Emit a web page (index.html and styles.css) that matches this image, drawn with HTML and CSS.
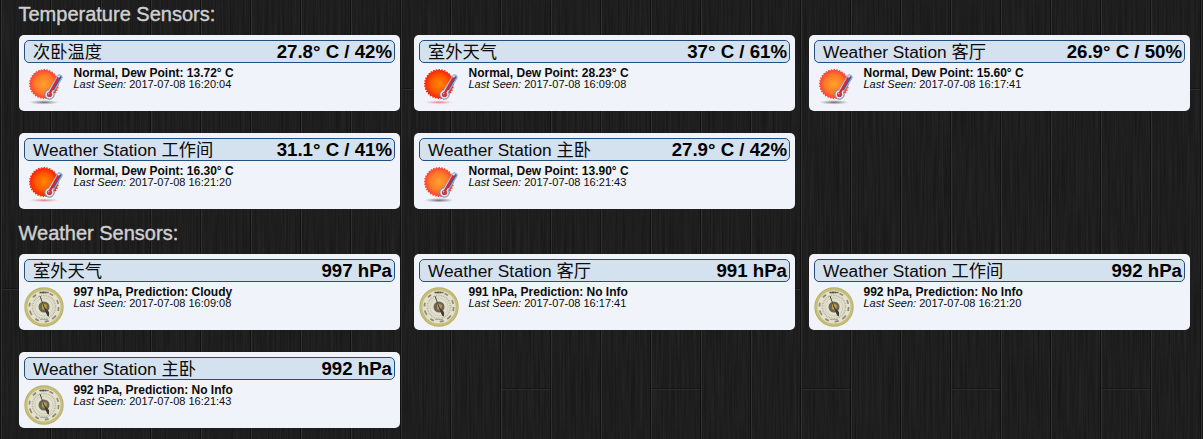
FILE: index.html
```html
<!DOCTYPE html>
<html lang="en">
<head>
<meta charset="utf-8">
<title>Sensors</title>
<link rel="stylesheet" href="styles.css">
</head>
<body>
<svg class="wood" width="1203" height="439" aria-hidden="true">
  <defs>
    <filter id="grain" x="0" y="0" width="100%" height="100%" color-interpolation-filters="sRGB">
      <feTurbulence type="fractalNoise" baseFrequency=".6 .014" numOctaves="2" seed="6"/>
      <feColorMatrix values=".075 0 0 0 .08  .075 0 0 0 .08  .075 0 0 0 .08  0 0 0 0 1"/>
    </filter>
    <pattern id="planks" width="150" height="439" patternUnits="userSpaceOnUse">
      <path d="M.5 0v439M50.500 0v439M100.500 0v439" stroke="#121212"/>
      <path d="M1.500 0v439M51.500 0v439M101.500 0v439" stroke="#303030"/>
      <path d="M102 88.500h48M2 288.500h48M52 388.500h48" stroke="#151515"/>
      <path d="M102 89.500h48M2 289.500h48M52 389.500h48" stroke="#2c2c2c"/>
    </pattern>
    <radialGradient id="warm"><stop offset="0" stop-color="#ffa22c"/><stop offset=".65" stop-color="#ff7a28"/><stop offset="1" stop-color="#fb4535"/></radialGradient>
    <radialGradient id="hot"><stop offset="0" stop-color="#ff8a00"/><stop offset=".6" stop-color="#ff5a00"/><stop offset="1" stop-color="#fa2408"/></radialGradient>
    <radialGradient id="shade"><stop offset="0" stop-color="#555" stop-opacity=".85"/><stop offset="1" stop-color="#777" stop-opacity="0"/></radialGradient>
    <radialGradient id="shadeHot"><stop offset="0" stop-color="#d66" stop-opacity=".8"/><stop offset="1" stop-color="#e88" stop-opacity="0"/></radialGradient>
    <g id="thermometer">
      <path d="M35.500 12.500L26.500 27" stroke="#8f9db8" stroke-width="6" stroke-linecap="round"/>
      <circle cx="25.500" cy="29.500" r="4.700" fill="#dce4ee" stroke="#71819b"/>
      <path d="M35.500 12.500L26.500 27" stroke="#d5e2f2" stroke-width="4.400" stroke-linecap="round"/>
      <path d="M37 11.500L29 25" stroke="#2f62ae" stroke-width="2"/>
      <path d="M34.500 12.500L25.800 28" stroke="#d52830" stroke-width="2.500"/>
      <circle cx="25.500" cy="29.500" r="2.600" fill="#c83843"/>
      <circle cx="24.800" cy="28.800" r=".8" fill="#f3b2b3"/>
    </g>
    <symbol id="sun-warm" viewBox="0 0 40 40">
      <ellipse cx="20" cy="37.300" rx="15" ry="2.300" fill="url(#shade)"/>
      <circle cx="20" cy="19" r="14" fill="url(#warm)"/>
      <circle cx="20" cy="19" r="14.200" fill="none" stroke="#fb4939" stroke-width="1.500" stroke-dasharray="1.500 1.250"/>
      <use href="#thermometer"/>
    </symbol>
    <symbol id="sun-hot" viewBox="0 0 40 40">
      <ellipse cx="20" cy="37.300" rx="15" ry="2" fill="url(#shadeHot)"/>
      <circle cx="20" cy="19" r="14" fill="url(#hot)"/>
      <circle cx="20" cy="19" r="14.200" fill="none" stroke="#fa2810" stroke-width="1.500" stroke-dasharray="1.500 1.250"/>
      <use href="#thermometer"/>
    </symbol>
    <symbol id="barometer" viewBox="0 0 40 40">
      <circle cx="20" cy="20" r="19" fill="#e3e0cc" stroke="#b9b266" stroke-width="1.400"/>
      <circle cx="20" cy="20" r="17.600" fill="none" stroke="#c5be78" stroke-width="2"/>
      <circle cx="20" cy="20" r="14.600" fill="none" stroke="#8c8a7c" stroke-width="1.700" stroke-dasharray="4 5 5 4 4 6"/>
      <circle cx="20" cy="20" r="11.500" fill="none" stroke="#aeac9d" stroke-width="1.600" stroke-dasharray=".8 .9"/>
      <circle cx="20" cy="20" r="9" fill="none" stroke="#c3c1b1" stroke-width=".7"/>
      <path d="M15.500 5.500h9" stroke="#4d4c44" stroke-width="1.700" stroke-dasharray="2 .6"/>
      <circle cx="20" cy="20" r="5.500" fill="#69665a"/>
      <path d="M18 16l5 2-1 6-4-2z" fill="#b99848"/>
      <path d="M16 9l4 11 4 9" fill="none" stroke="#4a493f" stroke-width="1"/>
      <path d="M20 20l5 5 0 5-3-4z" fill="#3d3b32"/>
      <path d="M16 32.500h8" stroke="#aaa898" stroke-width="1"/>
    </symbol>
  </defs>
  <rect width="1203" height="439" filter="url(#grain)"/>
  <rect width="1203" height="439" fill="url(#planks)"/>
</svg>
<main class="page">
  <section class="group">
    <h2 class="heading">Temperature Sensors:</h2>
    <div class="cards">
      <article class="card"><header class="bar"><span class="name">次卧温度</span><b class="value">27.8° C / 42%</b></header><div class="body"><svg class="icon"><use href="#sun-warm"/></svg><div class="info"><b class="status">Normal, Dew Point: 13.72° C</b><span class="seen"><i>Last Seen:</i> 2017-07-08 16:20:04</span></div></div></article>
      <article class="card"><header class="bar"><span class="name">室外天气</span><b class="value">37° C / 61%</b></header><div class="body"><svg class="icon"><use href="#sun-hot"/></svg><div class="info"><b class="status">Normal, Dew Point: 28.23° C</b><span class="seen"><i>Last Seen:</i> 2017-07-08 16:09:08</span></div></div></article>
      <article class="card"><header class="bar"><span class="name">Weather Station 客厅</span><b class="value">26.9° C / 50%</b></header><div class="body"><svg class="icon"><use href="#sun-warm"/></svg><div class="info"><b class="status">Normal, Dew Point: 15.60° C</b><span class="seen"><i>Last Seen:</i> 2017-07-08 16:17:41</span></div></div></article>
      <article class="card"><header class="bar"><span class="name">Weather Station 工作间</span><b class="value">31.1° C / 41%</b></header><div class="body"><svg class="icon"><use href="#sun-hot"/></svg><div class="info"><b class="status">Normal, Dew Point: 16.30° C</b><span class="seen"><i>Last Seen:</i> 2017-07-08 16:21:20</span></div></div></article>
      <article class="card"><header class="bar"><span class="name">Weather Station 主卧</span><b class="value">27.9° C / 42%</b></header><div class="body"><svg class="icon"><use href="#sun-warm"/></svg><div class="info"><b class="status">Normal, Dew Point: 13.90° C</b><span class="seen"><i>Last Seen:</i> 2017-07-08 16:21:43</span></div></div></article>
    </div>
  </section>
  <section class="group">
    <h2 class="heading">Weather Sensors:</h2>
    <div class="cards">
      <article class="card"><header class="bar"><span class="name">室外天气</span><b class="value">997 hPa</b></header><div class="body"><svg class="icon gauge"><use href="#barometer"/></svg><div class="info"><b class="status">997 hPa, Prediction: Cloudy</b><span class="seen"><i>Last Seen:</i> 2017-07-08 16:09:08</span></div></div></article>
      <article class="card"><header class="bar"><span class="name">Weather Station 客厅</span><b class="value">991 hPa</b></header><div class="body"><svg class="icon gauge"><use href="#barometer"/></svg><div class="info"><b class="status">991 hPa, Prediction: No Info</b><span class="seen"><i>Last Seen:</i> 2017-07-08 16:17:41</span></div></div></article>
      <article class="card"><header class="bar"><span class="name">Weather Station 工作间</span><b class="value">992 hPa</b></header><div class="body"><svg class="icon gauge"><use href="#barometer"/></svg><div class="info"><b class="status">992 hPa, Prediction: No Info</b><span class="seen"><i>Last Seen:</i> 2017-07-08 16:21:20</span></div></div></article>
      <article class="card"><header class="bar"><span class="name">Weather Station 主卧</span><b class="value">992 hPa</b></header><div class="body"><svg class="icon gauge"><use href="#barometer"/></svg><div class="info"><b class="status">992 hPa, Prediction: No Info</b><span class="seen"><i>Last Seen:</i> 2017-07-08 16:21:43</span></div></div></article>
    </div>
  </section>
</main>
</body>
</html>
```
FILE: styles.css
```css
body {
  margin: 0;
  height: 439px;
  overflow: hidden;
  font-family: "Liberation Sans", "Noto Sans CJK SC", sans-serif;
  color: #0b0b0b;
  background: #1d1d1d;
}
/* wood plank backdrop behind the page */
.wood {
  position: absolute;
  inset: 0;
  z-index: -1;
}
.page { padding-left: 19px; }
.heading {
  margin: 0 0 0 -.5px;
  height: 35px;
  font-size: 20px;
  line-height: 28px;
  font-weight: 400;
  color: #d0d0d0;
  -webkit-text-stroke: .4px #d0d0d0;
}
.group + .group { padding-top: 10px; }
.cards {
  display: grid;
  grid-template-columns: repeat(3, 381px);
  column-gap: 14px;
  row-gap: 22px;
}
.card {
  box-sizing: border-box;
  height: 76px;
  padding: 5px;
  border-radius: 5px;
  background: #f0f4fa;
}
.bar {
  box-sizing: border-box;
  display: flex;
  justify-content: space-between;
  height: 23px;
  padding: 0 2px 0 8px;
  border: 1px solid #24507f;
  border-radius: 5px;
  background: #d4e1ee;
  line-height: 22px;
  white-space: nowrap;
}
.name { font-size: 17.3px; line-height: 22px; }
.value { font-size: 18.67px; color: #000; }
.body { display: flex; gap: 9.5px; }
.icon { width: 40px; height: 40px; margin-top: 2px; }
.gauge { margin-top: 5px; }
.info { display: flex; flex-direction: column; padding-top: 4px; }
.status { font-size: 12px; line-height: 12px; }
.seen { font-size: 11px; line-height: 11px; }
```
